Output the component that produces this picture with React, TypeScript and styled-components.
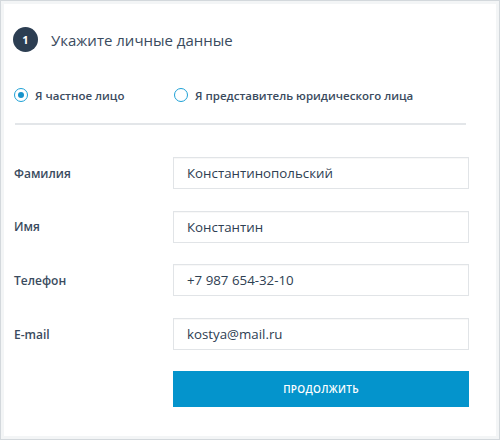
import React, { useState } from 'react';
import styled, { createGlobalStyle } from 'styled-components';

const GlobalStyle = createGlobalStyle`
    html, body {
        margin: 0;
        padding: 0;
        background: #ffffff;
    }
    body {
        font-family: 'Open Sans', 'Noto Sans', Arial, sans-serif;
        color: #34465a;
    }
`;

interface RadioProps {
    checked: boolean;
}

const Frame = styled.div`
    box-sizing: border-box;
    width: 500px;
    height: 440px;
    border: 1px solid #d3d8dc;
    box-shadow: inset 0 0 0 3px #f3f5f6;
    padding: 26px 31px 0 12px;
    display: flex;
    flex-direction: column;
`;

const Header = styled.div`
    display: flex;
    flex-direction: row;
    align-items: center;
    gap: 13px;
    height: 25px;
`;

const StepBadge = styled.div`
    width: 25px;
    height: 25px;
    border-radius: 50%;
    background: #2c3e52;
    color: #ffffff;
    font-size: 11px;
    font-weight: 700;
    display: flex;
    align-items: center;
    justify-content: center;
`;

const Title = styled.h2`
    margin: 0;
    font-size: 15px;
    font-weight: 400;
    color: #3a4b5e;
`;

const RadioGroup = styled.div`
    display: grid;
    grid-template-columns: 160px 1fr;
    margin-top: 35px;
    padding-left: 1px;
    height: 16px;
    align-items: center;
`;

const RadioLabel = styled.label`
    display: flex;
    flex-direction: row;
    align-items: center;
    gap: 7px;
    font-size: 11.5px;
    font-weight: 600;
    color: #3a4b5e;
    cursor: pointer;
`;

const RadioCircle = styled.span<RadioProps>`
    box-sizing: border-box;
    width: 14px;
    height: 14px;
    border-radius: 50%;
    border: 1.5px solid #1ea1d6;
    display: flex;
    align-items: center;
    justify-content: center;
    &::after {
        content: '';
        width: 6px;
        height: 6px;
        border-radius: 50%;
        background: ${({ checked }) => (checked ? '#1693cc' : 'transparent')};
    }
`;

const Divider = styled.div`
    height: 2px;
    background: #e3e6e9;
    margin: 20px 2px 0 2px;
`;

const Form = styled.div`
    display: flex;
    flex-direction: column;
    gap: 21.7px;
    margin-top: 32px;
`;

const Row = styled.div`
    display: grid;
    grid-template-columns: 160px 1fr;
    align-items: center;
`;

const FieldLabel = styled.span`
    font-size: 12px;
    font-weight: 600;
    color: #3a4b5e;
    padding-left: 1px;
`;

const Input = styled.input`
    box-sizing: border-box;
    width: 296px;
    height: 32px;
    border: 1px solid #e1e4e7;
    box-shadow: inset 0 1px 1px rgba(0, 0, 0, 0.03);
    padding: 0 13px;
    font-family: inherit;
    font-size: 13.3px;
    font-weight: 500;
    color: #2e4052;
    outline: none;
    background: #ffffff;
`;

const SubmitButton = styled.button`
    box-sizing: border-box;
    width: 296px;
    height: 36px;
    border: none;
    background: #0494cc;
    color: #ffffff;
    font-family: inherit;
    font-size: 10px;
    font-weight: 600;
    letter-spacing: 0.3px;
    cursor: pointer;
`;

const ButtonRow = styled(Row)`
    margin-top: 21px;
`;

const fields = [
    { label: 'Фамилия', value: 'Константинопольский' },
    { label: 'Имя', value: 'Константин' },
    { label: 'Телефон', value: '+7 987 654-32-10' },
    { label: 'E-mail', value: 'kostya@mail.ru' },
];

const App: React.FC = () => {
    const [kind, setKind] = useState<'private' | 'legal'>('private');
    const [values, setValues] = useState<string[]>(fields.map((f) => f.value));

    return (
        <>
            <GlobalStyle />
            <Frame>
                <Header>
                    <StepBadge>1</StepBadge>
                    <Title>Укажите личные данные</Title>
                </Header>
                <RadioGroup>
                    <RadioLabel onClick={() => setKind('private')}>
                        <RadioCircle checked={kind === 'private'} />
                        Я частное лицо
                    </RadioLabel>
                    <RadioLabel onClick={() => setKind('legal')}>
                        <RadioCircle checked={kind === 'legal'} />
                        Я представитель юридического лица
                    </RadioLabel>
                </RadioGroup>
                <Divider />
                <Form>
                    {fields.map((field, index) => (
                        <Row key={field.label}>
                            <FieldLabel>{field.label}</FieldLabel>
                            <Input
                                value={values[index]}
                                onChange={(e) => {
                                    const next = [...values];
                                    next[index] = e.target.value;
                                    setValues(next);
                                }}
                            />
                        </Row>
                    ))}
                </Form>
                <ButtonRow>
                    <span />
                    <SubmitButton>ПРОДОЛЖИТЬ</SubmitButton>
                </ButtonRow>
            </Frame>
        </>
    );
};

export default App;
